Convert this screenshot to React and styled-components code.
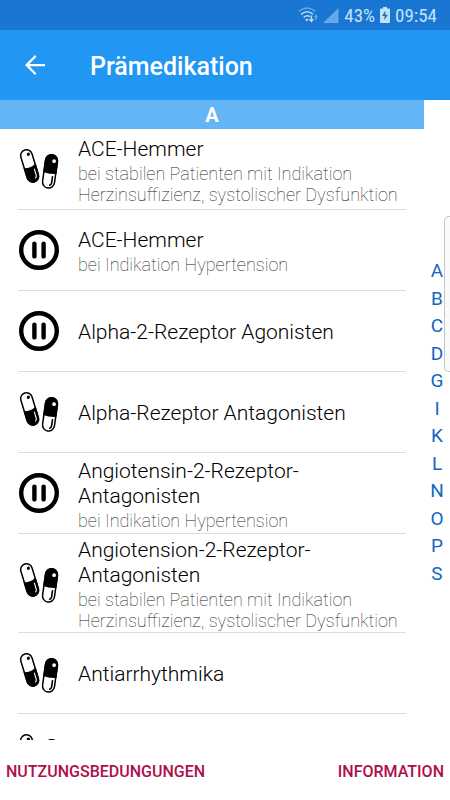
import styled, { createGlobalStyle } from "styled-components";

const medications = [
  {
    icon: "pills",
    title: "ACE-Hemmer",
    note: "bei stabilen Patienten mit Indikation Herzinsuffizienz, systolischer Dysfunktion",
  },
  { icon: "pause", title: "ACE-Hemmer", note: "bei Indikation Hypertension" },
  { icon: "pause", title: "Alpha-2-Rezeptor Agonisten" },
  { icon: "pills", title: "Alpha-Rezeptor Antagonisten" },
  {
    icon: "pause",
    title: "Angiotensin-2-Rezeptor-Antagonisten",
    note: "bei Indikation Hypertension",
  },
  {
    icon: "pills",
    title: "Angiotension-2-Rezeptor-Antagonisten",
    note: "bei stabilen Patienten mit Indikation Herzinsuffizienz, systolischer Dysfunktion",
  },
  { icon: "pills", title: "Antiarrhythmika" },
  { icon: "pills", title: "" },
];

const letters = ["A", "B", "C", "D", "G", "I", "K", "L", "N", "O", "P", "S"];

function PillsIcon() {
  return (
    <svg width="40" height="42" viewBox="0 0 40 42" aria-hidden="true">
      <g transform="translate(10.6 17.8) rotate(-17)">
        <rect x="-5.8" y="-16.6" width="11.6" height="33.2" rx="5.8" fill="#fff" stroke="#000" strokeWidth="1.5" />
        <path d="M-6.5 0.5Q0 3 6.5 -0.5V11A6.5 6.5 0 0 1-6.5 11Z" />
        <circle cx="2.2" cy="-11.4" r="1.6" />
        <path d="M3.6 4.5V11Q3.6 12.5 2.2 13.4" fill="none" stroke="#fff" strokeWidth="1.1" strokeLinecap="round" />
      </g>
      <g transform="translate(31 23.5) rotate(8)">
        <rect x="-6" y="-16.6" width="12" height="33.2" rx="6" fill="#fff" stroke="#000" strokeWidth="1.5" />
        <path d="M-6.7 1.5V-11A6.7 6.7 0 0 1 6.7-11V1.5Q0 3-6.7 1.5Z" />
        <circle cx="2.6" cy="-10.8" r="1.9" fill="#fff" />
        <path d="M3.2 4.8V11Q3.2 12.6 1.6 13.6" fill="none" stroke="#000" strokeWidth="1.6" strokeLinecap="round" />
      </g>
    </svg>
  );
}

function PauseIcon() {
  return (
    <svg width="40" height="40" viewBox="0 0 40 40" aria-hidden="true">
      <circle cx="20" cy="20" r="17.8" fill="none" stroke="#000" strokeWidth="4.4" />
      <path d="M15.4 13.6V26.4M24.6 13.6V26.4" stroke="#000" strokeWidth="4.4" strokeLinecap="round" />
    </svg>
  );
}

function WifiIcon() {
  return (
    <svg width="20" height="16" viewBox="0 0 20 16" fill="none" stroke="#b5dafa" strokeWidth="1.5" aria-hidden="true">
      <path d="M0.8 4.4Q9 -2.4 17.2 4.4" opacity="0.5" />
      <path d="M3 7.4Q9 2.4 15 7.2M5.6 10.4Q9 7.6 12 9.6" />
      <path d="M7 12.2 9 14.6 10.6 12.6Q9 11 7 12.2Z" fill="#b5dafa" stroke="none" />
      <path d="M13.4 8.6V14M11.4 12.2 13.4 14.4 15.4 12.2" />
      <path d="M18 13V8.6M16.6 10 18 8.4 19.4 10" opacity="0.5" />
    </svg>
  );
}

export default function App() {
  return (
    <>
      <GlobalStyle />
      <Screen>
        <StatusBar>
          <WifiIcon />
          <svg width="16" height="15" viewBox="0 0 16 15" aria-hidden="true">
            <path d="M15.5 0V15H0Z" fill="#64a9ea" />
          </svg>
          <span>43%</span>
          <svg width="10" height="16" viewBox="0 0 10 16" aria-hidden="true">
            <path d="M3 0H7V1.6H9Q10 1.6 10 2.6V15Q10 16 9 16H1Q0 16 0 15V2.6Q0 1.6 1 1.6H3Z" fill="#c3e3fc" />
            <path d="M5.4 3.8 2 9H4.6L4.2 13.2 8 7.8H5.4Z" fill="#2f6fb0" />
          </svg>
          <span>09:54</span>
        </StatusBar>
        <AppBar>
          <BackButton aria-label="Zurück">
            <svg width="30" height="30" viewBox="0 0 24 24" fill="#fff" aria-hidden="true">
              <path d="M20 11.1H7.5l5.6-5.8L12 4l-8 8 8 8 1.1-1.3-5.6-5.8H20z" />
            </svg>
          </BackButton>
          <h1>Prämedikation</h1>
        </AppBar>
        <Content>
          <ListColumn>
            <SectionHeader>A</SectionHeader>
            <List>
              {medications.map((item, i) => (
                <Row key={i}>
                  <IconBox>{item.icon === "pills" ? <PillsIcon /> : <PauseIcon />}</IconBox>
                  <RowText>
                    <Title>{item.title}</Title>
                    {item.note && <Note>{item.note}</Note>}
                  </RowText>
                </Row>
              ))}
            </List>
          </ListColumn>
          <LetterIndex aria-label="Index">
            {letters.map((letter) => (
              <a href={`#${letter}`} key={letter}>
                {letter}
              </a>
            ))}
          </LetterIndex>
          <EdgeHandle />
        </Content>
        <Footer>
          <FooterButton>NUTZUNGSBEDUNGUNGEN</FooterButton>
          <FooterButton>INFORMATION</FooterButton>
        </Footer>
      </Screen>
    </>
  );
}

const GlobalStyle = createGlobalStyle`
  * {
    box-sizing: border-box;
  }
  body {
    margin: 0;
    background: #fff;
    font-family: Roboto, "Liberation Sans", sans-serif;
  }
  button {
    padding: 0;
    border: none;
    background: none;
    font-family: inherit;
    cursor: pointer;
  }
`;

const Screen = styled.div`
  display: flex;
  flex-direction: column;
  height: 100vh;
`;

const StatusBar = styled.div`
  display: flex;
  flex: none;
  align-items: center;
  justify-content: flex-end;
  gap: 5px;
  height: 30px;
  padding: 0 13px;
  background: #1976d2;
  color: #c3e3fc;
  font-family: "Roboto Condensed", Roboto, sans-serif;
  font-size: 19px;
`;

const AppBar = styled.header`
  display: flex;
  flex: none;
  align-items: center;
  gap: 40px;
  height: 70px;
  padding: 0 20px;
  background: #2196f3;
  color: #fff;

  h1 {
    margin: 0;
    padding-top: 2px;
    font-size: 25px;
    font-weight: 500;
  }
`;

const BackButton = styled.button`
  display: flex;
`;

const Content = styled.main`
  position: relative;
  display: flex;
  flex: 1;
  min-height: 0;
`;

const ListColumn = styled.div`
  flex: 1;
  min-width: 0;
  overflow: hidden;
`;

const SectionHeader = styled.h2`
  margin: 0;
  padding-top: 2px;
  background: #64b5f6;
  color: #fff;
  font-size: 20px;
  font-weight: 700;
  line-height: 27px;
  text-align: center;
`;

const List = styled.ul`
  margin: 0;
  padding: 0 18px;
  list-style: none;
`;

const Row = styled.li`
  display: flex;
  align-items: center;
  gap: 19px;
  min-height: 81px;
  border-bottom: 1px solid #dcdcdc;
`;

const IconBox = styled.div`
  display: flex;
  flex: none;
  padding-left: 1px;
`;

const RowText = styled.div`
  flex: 1;
  padding: 4px 0 1px;
`;

const Title = styled.h3`
  margin: 0;
  color: #000;
  font-size: 21px;
  font-weight: 300;
  line-height: 25px;
`;

const Note = styled.p`
  margin: 1px 0 0;
  color: #222;
  font-size: 18px;
  font-weight: 100;
  line-height: 21px;
`;

const LetterIndex = styled.nav`
  display: flex;
  flex: none;
  flex-direction: column;
  align-self: center;
  width: 26px;
  height: 334px;
  padding-top: 4px;

  a {
    flex: 1;
    color: #1565c0;
    font-size: 19px;
    font-weight: 400;
    line-height: 27px;
    text-align: center;
    text-decoration: none;
  }
`;

const EdgeHandle = styled.div`
  position: absolute;
  top: 116px;
  right: 0;
  width: 6px;
  height: 156px;
  border: 1px solid #c4c4c4;
  border-right: none;
  border-radius: 5px 0 0 5px;
  background: #fafafa;
`;

const Footer = styled.footer`
  display: flex;
  flex: none;
  align-items: center;
  justify-content: space-between;
  height: 60px;
  padding: 0 6px;
`;

const FooterButton = styled.button`
  padding-top: 2px;
  color: #ad0f4b;
  font-size: 16px;
  font-weight: 500;
`;
